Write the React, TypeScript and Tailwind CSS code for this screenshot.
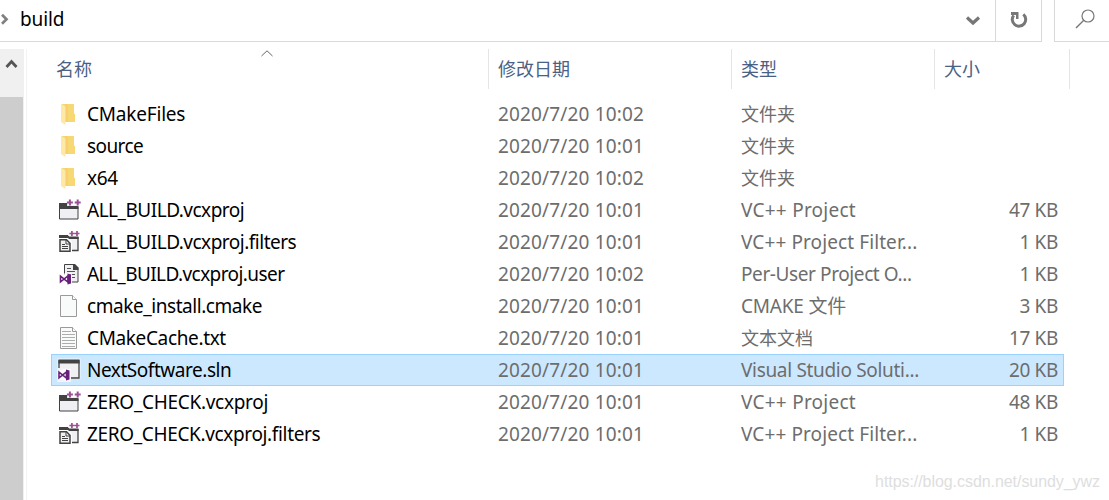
import type { ReactNode } from 'react';
import clsx from 'clsx';

type IconKind = 'folder' | 'project' | 'filters' | 'user' | 'blank' | 'text' | 'solution';

interface FileEntry {
  name: string;
  nameClass: string;
  date: string;
  type: string;
  typeClass: string;
  size?: string;
  icon: IconKind;
  selected?: boolean;
}

const files: FileEntry[] = [
  { name: 'CMakeFiles', nameClass: 'tracking-[-0.2px]', date: '2020/7/20 10:02', type: '文件夹', typeClass: 'text-[18px]', icon: 'folder' },
  { name: 'source', nameClass: 'tracking-[-0.6px]', date: '2020/7/20 10:01', type: '文件夹', typeClass: 'text-[18px]', icon: 'folder' },
  { name: 'x64', nameClass: 'tracking-[-0.3px]', date: '2020/7/20 10:02', type: '文件夹', typeClass: 'text-[18px]', icon: 'folder' },
  { name: 'ALL_BUILD.vcxproj', nameClass: 'tracking-[-0.5px]', date: '2020/7/20 10:01', type: 'VC++ Project', typeClass: 'tracking-[0.25px]', size: '47 KB', icon: 'project' },
  { name: 'ALL_BUILD.vcxproj.filters', nameClass: 'tracking-[-0.5px]', date: '2020/7/20 10:01', type: 'VC++ Project Filter...', typeClass: 'tracking-[0.1px]', size: '1 KB', icon: 'filters' },
  { name: 'ALL_BUILD.vcxproj.user', nameClass: 'tracking-[-0.58px]', date: '2020/7/20 10:02', type: 'Per-User Project O...', typeClass: 'tracking-[-0.4px]', size: '1 KB', icon: 'user' },
  { name: 'cmake_install.cmake', nameClass: 'tracking-[-0.44px]', date: '2020/7/20 10:01', type: 'CMAKE 文件', typeClass: 'tracking-[-0.2px]', size: '3 KB', icon: 'blank' },
  { name: 'CMakeCache.txt', nameClass: 'tracking-[-0.36px]', date: '2020/7/20 10:01', type: '文本文档', typeClass: 'text-[18px]', size: '17 KB', icon: 'text' },
  { name: 'NextSoftware.sln', nameClass: 'tracking-[-0.46px]', date: '2020/7/20 10:01', type: 'Visual Studio Soluti...', typeClass: 'tracking-[-0.32px]', size: '20 KB', icon: 'solution', selected: true },
  { name: 'ZERO_CHECK.vcxproj', nameClass: 'tracking-[-0.3px]', date: '2020/7/20 10:01', type: 'VC++ Project', typeClass: 'tracking-[0.25px]', size: '48 KB', icon: 'project' },
  { name: 'ZERO_CHECK.vcxproj.filters', nameClass: 'tracking-[-0.35px]', date: '2020/7/20 10:01', type: 'VC++ Project Filter...', typeClass: 'tracking-[0.1px]', size: '1 KB', icon: 'filters' },
];

const VsMark = ({ x, y }: { x: number; y: number }) => (
  <g transform={`translate(${x} ${y})`}>
    <path d="M-.5 2 8-.5l4.500 1v10.500l-4 1-9-2z" fill="#fff" opacity=".8" />
    <path d="M1 3.200v5.600l7.500-6v6.400z" fill="none" stroke="#68217a" strokeWidth="1.600" />
    <path d="M8 .5l3.500 1v9L8 11.500z" fill="#68217a" />
  </g>
);

const icons: Record<IconKind, ReactNode> = {
  folder: (
    <>
      <path d="M8 6h12v10h1v8H8z" fill="#f8d775" />
      <path d="M11 6h3v18h-3z" fill="#f5d06c" />
      <path d="M7 6l4.500 2.500v18.500L7 24z" fill="#fde8a6" />
    </>
  ),
  project: (
    <>
      <path d="M5.500 13h18.500v12h-18.500z" fill="#f0eff3" stroke="#424242" />
      <path d="M5 9h9v2.500h10.500V15H5z" fill="#424242" />
      <path d="M13 4.500h14.500v7.500H13z" fill="#fff" opacity=".85" />
      <path d="M15.900 5.500v6M12.900 8.500h6M23.700 5.500v6M20.700 8.500h6" stroke="#9b4f96" strokeWidth="2" />
    </>
  ),
  filters: (
    <>
      <path d="M5.500 11h18.500v13.500H14z" fill="#f0eff3" />
      <path d="M24 11v13.500h-6" fill="none" stroke="#424242" strokeWidth="1.300" />
      <path d="M5 9h10v1.500h9.500V13H5z" fill="#424242" />
      <path d="M14 4.500h12v5.500H14z" fill="#fff" opacity=".8" />
      <path d="M17.900 5v5M15.400 7.500h5M23 5v5M20.500 7.500h5" stroke="#9b4f96" strokeWidth="1.700" />
      <path d="M4 12h10l4 4v11H4z" fill="#fff" />
      <path d="M6 13.700h6.500l3.500 3.500V25.300H6z" fill="#f0eff3" stroke="#424242" strokeWidth="1.500" />
      <path d="M12 14v4h4M8 18.500h3M8 20.500h6M8 22.500h6" fill="none" stroke="#424242" />
    </>
  ),
  user: (
    <>
      <path d="M10.500 17V6.500h9.500l4 4V24h-7" fill="#f0eff3" stroke="#424242" />
      <path d="M19 6h2l3.500 3.500V12H19z" fill="#424242" />
      <path d="M13 10.500h4M13 13.500h8M15 16.500h6M18 19.500h3" stroke="#555" />
      <VsMark x={5.500} y={15} />
    </>
  ),
  blank: (
    <>
      <path d="M6.500 5.500h12l4 4v17h-16z" fill="#f9fafa" stroke="#9a9a9a" />
      <path d="M18.500 5.500v4h4" fill="#fff" stroke="#9a9a9a" />
    </>
  ),
  text: (
    <>
      <path d="M6.500 5.500h12l4 4v17h-16z" fill="#f9fafa" stroke="#9a9a9a" />
      <path d="M18.500 5.500v4h4" fill="#fff" stroke="#9a9a9a" />
      <path d="M8 9.500h9M8 12.500h13M8 15.500h13M8 18.500h13M8 21.500h13M8 24.500h13" stroke="#adadad" />
    </>
  ),
  solution: (
    <>
      <path d="M3.500 4.500h23v20.500H17v3H3.500z" fill="#fff" opacity=".7" />
      <path d="M5 7h20v17H5z" fill="#f0eff3" stroke="#424242" strokeWidth="1.300" />
      <path d="M4.400 5.500h21.200v4H4.400z" fill="#424242" />
      <path d="M3.500 14h13.500v13.500H3.500z" fill="#f2f2f6" />
      <VsMark x={4} y={15} />
    </>
  ),
};

const FileIcon = ({ kind }: { kind: IconKind }) => (
  <svg width="33" height="32" viewBox="0 0 33 32" className="shrink-0">
    {icons[kind]}
  </svg>
);

const AddressBar = () => (
  <div className="flex h-[42px]">
    <div className="flex w-[1042px] items-center border-r border-b border-[#d9d9d9]">
      <svg width="20" height="41" viewBox="0 0 20 41" className="shrink-0">
        <path d="M2 14.700l4.500 4.500L2 23.700" fill="none" stroke="#808080" strokeWidth="2.700" />
      </svg>
      <span className="-mt-1 flex-1 tracking-[-0.1px] text-black">build</span>
      <svg width="45" height="41" viewBox="0 0 45 41">
        <path d="M17 17.500l6 5.500 6-5.500" fill="none" stroke="#777" strokeWidth="3.200" />
      </svg>
      <div className="h-full border-l border-[#d9d9d9]">
        <svg width="45" height="41" viewBox="0 0 45 41">
          <path d="M27.300 14.300a6.700 6.700 0 1 1-9.600 1" fill="none" stroke="#777" strokeWidth="3" />
          <path d="M15 12h7.500v7h-2.500v-4h-5z" fill="#777" />
        </svg>
      </div>
    </div>
    <div className="ml-3 flex-1 border-b border-l border-[#d9d9d9]">
      <svg width="54" height="41" viewBox="0 0 54 41">
        <circle cx="33" cy="16" r="6" fill="none" stroke="#777" strokeWidth="1.200" />
        <path d="M28.800 20.300L21 28" stroke="#777" strokeWidth="1.400" />
      </svg>
    </div>
  </div>
);

const ScrollBar = () => (
  <div className="flex w-6 flex-col bg-[#f0f0f0]">
    <svg width="24" height="48" viewBox="0 0 24 48" className="shrink-0">
      <path d="M6.500 18l5-5.500 5 5.500" fill="none" stroke="#555" strokeWidth="2.800" />
    </svg>
    <div className="w-[23px] flex-1 bg-[#cdcdcd]" />
  </div>
);

const HeaderRow = () => (
  <div className="relative flex h-10 items-center text-[18px] text-[#4a6184]">
    <svg width="12" height="7" viewBox="0 0 12 7" className="absolute top-[1px] left-[234px]">
      <path d="M.5 6L6 .8 11.500 6" fill="none" stroke="#666" />
    </svg>
    <div className="flex h-full w-[462px] items-center border-r border-[#e5e5e5] pl-[29px]">名称</div>
    <div className="flex h-full w-[243px] items-center border-r border-[#e5e5e5] pl-[9px]">修改日期</div>
    <div className="flex h-full w-[203px] items-center border-r border-[#e5e5e5] pl-[9px]">类型</div>
    <div className="flex h-full w-[135px] items-center border-r border-[#e5e5e5] pl-[9px]">大小</div>
  </div>
);

const FileRow = ({ file }: { file: FileEntry }) => (
  <div
    className={clsx(
      'flex h-8 w-[1013px] items-center border pl-[2px] whitespace-nowrap text-[#6d6d6d]',
      file.selected ? 'border-[#99d1ff] bg-[#cce8ff]' : 'border-transparent',
    )}
  >
    <FileIcon kind={file.icon} />
    <div className={clsx('w-[411px] text-black', file.nameClass)}>{file.name}</div>
    <div className="w-[243px] tracking-[0.15px]">{file.date}</div>
    <div className={clsx('w-[203px]', file.typeClass)}>{file.type}</div>
    <div className="flex-1 pr-[5px] text-right tracking-[-0.35px]">{file.size}</div>
  </div>
);

export default function App() {
  return (
    <div className="relative flex h-[500px] w-[1109px] flex-col overflow-hidden bg-white font-['Noto_Sans','Noto_Sans_CJK_SC',sans-serif] text-[19px] leading-6">
      <AddressBar />
      <div className="mt-[7px] flex flex-1">
        <ScrollBar />
        <div className="ml-[2px] w-[1px] bg-[#f3f3f3]" />
        <div className="flex-1">
          <HeaderRow />
          <div className="mt-[9px] ml-6">
            {files.map((file) => (
              <FileRow key={file.name} file={file} />
            ))}
          </div>
        </div>
      </div>
      <div className="absolute right-[9px] bottom-[6px] font-['Liberation_Sans',sans-serif] text-[16px] tracking-[-0.06px] text-[#dedede]">
        https://blog.csdn.net/sundy_ywz
      </div>
    </div>
  );
}
